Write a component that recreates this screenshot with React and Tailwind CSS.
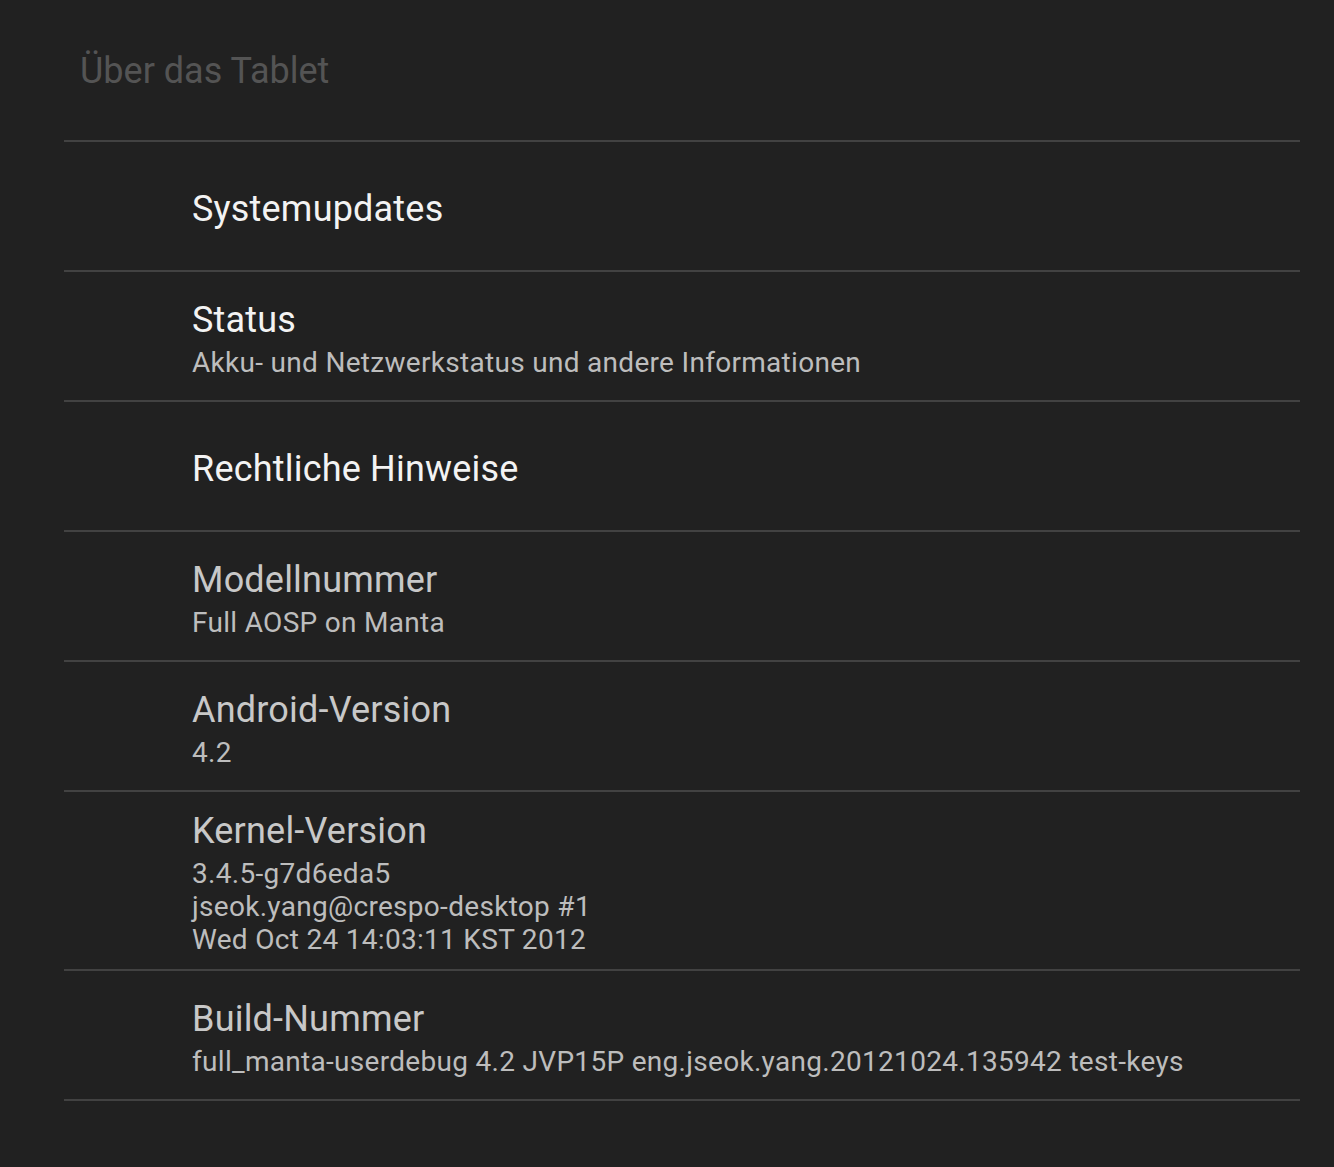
import React from "react";

const rows = [
  { title: "Systemupdates", bright: true },
  { title: "Status", bright: true, sub: ["Akku- und Netzwerkstatus und andere Informationen"] },
  { title: "Rechtliche Hinweise", bright: true },
  { title: "Modellnummer", sub: ["Full AOSP on Manta"] },
  { title: "Android-Version", sub: ["4.2"] },
  { title: "Kernel-Version", sub: ["3.4.5-g7d6eda5", "jseok.yang@crespo-desktop #1", "Wed Oct 24 14:03:11 KST 2012"] },
  { title: "Build-Nummer", sub: ["full_manta-userdebug 4.2 JVP15P eng.jseok.yang.20121024.135942 test-keys"] },
];

export default function App() {
  return (
    <div
      className="w-[1334px] h-[1167px] bg-[#212121] overflow-hidden"
      style={{ fontFamily: "Roboto, 'Noto Sans', sans-serif" }}
    >
      <div className="ml-[64px] mr-[34px]">
        <div className="h-[140px] pt-[50px] pl-[16px]">
          <div className="text-[36px] leading-[42px] text-[#545454]">Über das Tablet</div>
        </div>
        <div className="h-[2px] bg-[#424242]" />
        {rows.map((r) => (
          <div key={r.title}>
            <div className="min-h-[128px] flex flex-col justify-center pt-[18px] pb-[13px] pl-[128px]">
              <div
                className={
                  "text-[36px] leading-[42px] tracking-[0.2px] " +
                  (r.bright ? "text-[#f3f3f3]" : "text-[#c8c8c8]")
                }
              >
                {r.title}
              </div>
              {r.sub && (
                <div className="mt-[5px]">
                  {r.sub.map((s) => (
                    <div key={s} className="text-[28px] leading-[33px] tracking-[0.3px] text-[#bdbdbd]">
                      {s}
                    </div>
                  ))}
                </div>
              )}
            </div>
            <div className="h-[2px] bg-[#424242]" />
          </div>
        ))}
      </div>
    </div>
  );
}
